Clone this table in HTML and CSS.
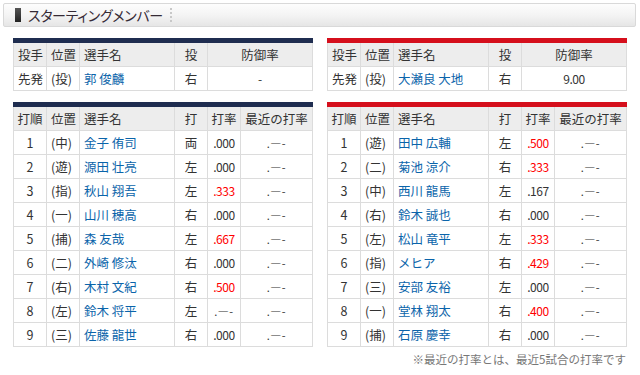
FILE: index.html
```html
<!DOCTYPE html>
<html lang="ja">
<head>
<meta charset="utf-8">
<title>スターティングメンバー</title>
<link rel="stylesheet" href="styles.css">
</head>
<body>
<div class="head">
  <span class="head-bar"></span>
  <h2 class="head-title">スターティングメンバー</h2>
  <span class="head-sep"></span>
</div>
<div class="teams">
  <div class="team team-home">
    <table class="tbl">
      <colgroup><col class="c1"><col class="c2"><col class="c3"><col class="c4"><col></colgroup>
      <tr><th class="l">投手</th><th class="l">位置</th><th class="l">選手名</th><th>投</th><th>防御率</th></tr>
      <tr><td class="l">先発</td><td class="l">(投)</td><td class="l name">郭 俊麟</td><td>右</td><td class="num">-</td></tr>
    </table>
    <table class="tbl bat">
      <colgroup><col class="c1"><col class="c2"><col class="c3"><col class="c4"><col class="c5"><col></colgroup>
      <tr><th>打順</th><th class="l">位置</th><th class="l">選手名</th><th>打</th><th>打率</th><th>最近の打率</th></tr>
      <tr><td>1</td><td class="l">(中)</td><td class="l name">金子 侑司</td><td>両</td><td class="num">.000</td><td class="dash">.―-</td></tr>
      <tr><td>2</td><td class="l">(遊)</td><td class="l name">源田 壮亮</td><td>左</td><td class="num">.000</td><td class="dash">.―-</td></tr>
      <tr><td>3</td><td class="l">(指)</td><td class="l name">秋山 翔吾</td><td>左</td><td class="num hi">.333</td><td class="dash">.―-</td></tr>
      <tr><td>4</td><td class="l">(一)</td><td class="l name">山川 穂高</td><td>右</td><td class="num">.000</td><td class="dash">.―-</td></tr>
      <tr><td>5</td><td class="l">(捕)</td><td class="l name">森 友哉</td><td>左</td><td class="num hi">.667</td><td class="dash">.―-</td></tr>
      <tr><td>6</td><td class="l">(二)</td><td class="l name">外崎 修汰</td><td>右</td><td class="num">.000</td><td class="dash">.―-</td></tr>
      <tr><td>7</td><td class="l">(右)</td><td class="l name">木村 文紀</td><td>右</td><td class="num hi">.500</td><td class="dash">.―-</td></tr>
      <tr><td>8</td><td class="l">(左)</td><td class="l name">鈴木 将平</td><td>左</td><td class="dash">.―-</td><td class="dash">.―-</td></tr>
      <tr><td>9</td><td class="l">(三)</td><td class="l name">佐藤 龍世</td><td>右</td><td class="num">.000</td><td class="dash">.―-</td></tr>
    </table>
  </div>
  <div class="team team-away">
    <table class="tbl">
      <colgroup><col class="c1"><col class="c2"><col class="c3"><col class="c4"><col></colgroup>
      <tr><th class="l">投手</th><th class="l">位置</th><th class="l">選手名</th><th>投</th><th>防御率</th></tr>
      <tr><td class="l">先発</td><td class="l">(投)</td><td class="l name">大瀬良 大地</td><td>右</td><td class="num">9.00</td></tr>
    </table>
    <table class="tbl bat">
      <colgroup><col class="c1"><col class="c2"><col class="c3"><col class="c4"><col class="c5"><col></colgroup>
      <tr><th>打順</th><th class="l">位置</th><th class="l">選手名</th><th>打</th><th>打率</th><th>最近の打率</th></tr>
      <tr><td>1</td><td class="l">(遊)</td><td class="l name">田中 広輔</td><td>左</td><td class="num hi">.500</td><td class="dash">.―-</td></tr>
      <tr><td>2</td><td class="l">(二)</td><td class="l name">菊池 涼介</td><td>右</td><td class="num hi">.333</td><td class="dash">.―-</td></tr>
      <tr><td>3</td><td class="l">(中)</td><td class="l name">西川 龍馬</td><td>左</td><td class="num">.167</td><td class="dash">.―-</td></tr>
      <tr><td>4</td><td class="l">(右)</td><td class="l name">鈴木 誠也</td><td>右</td><td class="num">.000</td><td class="dash">.―-</td></tr>
      <tr><td>5</td><td class="l">(左)</td><td class="l name">松山 竜平</td><td>左</td><td class="num hi">.333</td><td class="dash">.―-</td></tr>
      <tr><td>6</td><td class="l">(指)</td><td class="l name">メヒア</td><td>右</td><td class="num hi">.429</td><td class="dash">.―-</td></tr>
      <tr><td>7</td><td class="l">(三)</td><td class="l name">安部 友裕</td><td>左</td><td class="num">.000</td><td class="dash">.―-</td></tr>
      <tr><td>8</td><td class="l">(一)</td><td class="l name">堂林 翔太</td><td>右</td><td class="num hi">.400</td><td class="dash">.―-</td></tr>
      <tr><td>9</td><td class="l">(捕)</td><td class="l name">石原 慶幸</td><td>右</td><td class="num">.000</td><td class="dash">.―-</td></tr>
    </table>
    <p class="note">※最近の打率とは、最近5試合の打率です</p>
  </div>
</div>
</body>
</html>
```
FILE: styles.css
```css
html, body {
  margin: 0;
  padding: 0;
  background: #fff;
}
body {
  font-family: "Noto Sans CJK JP", "Liberation Sans", sans-serif;
  color: #333;
  width: 640px;
}
.head {
  margin: 3px 4px 0 3px;
  height: 22px;
  border: 1px solid #d9d9d9;
  border-radius: 2px;
  background: linear-gradient(to bottom, #fdfdfd 0%, #f4f4f4 50%, #e6e6e6 100%);
  display: flex;
  align-items: center;
}
.head-bar {
  width: 6px;
  height: 14px;
  margin-left: 11px;
  background: linear-gradient(to bottom, #555, #222);
}
.head-title {
  margin: 0 0 0 7px;
  font-size: 14px;
  font-weight: normal;
  line-height: 16px;
  color: #352a35;
  font-feature-settings: "palt";
  letter-spacing: -0.3px;
}
.head-sep {
  width: 0;
  height: 14px;
  margin-left: 7px;
  border-left: 2px dotted #c8c8c8;
}
.teams {
  display: flex;
  gap: 14px;
  padding: 0 13px;
  margin-top: 11px;
}
.team {
  width: 300px;
  display: flex;
  flex-direction: column;
}
.tbl {
  width: 300px;
  table-layout: fixed;
  border-collapse: collapse;
  font-size: 12.5px;
}
.team-home .tbl { border-top: 5px solid #1f2d50; }
.team-away .tbl { border-top: 5px solid #d50f1c; }
.bat { margin-top: 11px; }
.c1, .c2, .c4, .c5 { width: 33px; }
.c3 { width: 95px; }
.tbl th, .tbl td {
  border: 1px solid #dcdcdc;
  height: 23px;
  padding: 0;
  text-align: center;
  font-weight: normal;
  line-height: 16px;
  white-space: nowrap;
  overflow: hidden;
}
.tbl th { background: #ededed; }
.tbl .l { text-align: left; padding-left: 4px; }
.tbl .name { color: #0a64aa; }
.tbl .num { font-size: 12px; letter-spacing: -0.4px; }
.tbl .dash { font-size: 11px; letter-spacing: 0.5px; }
.tbl .hi { color: #ff0000; }
.note {
  margin: 5px 1px 0 0;
  text-align: right;
  font-size: 11.5px;
  color: #777;
  line-height: 14px;
}
```
